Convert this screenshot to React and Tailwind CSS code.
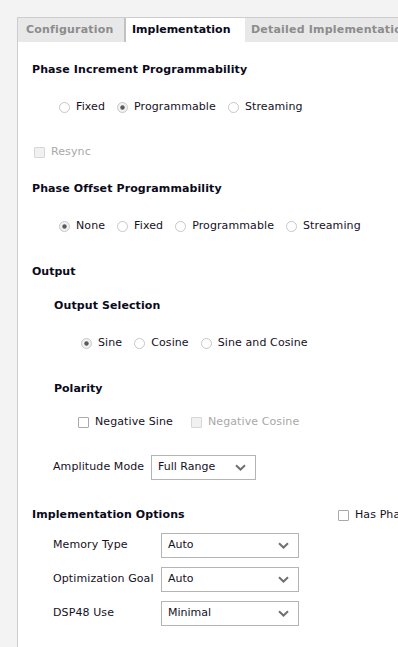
import React from "react";

const font = { fontFamily: '"DejaVu Sans", Verdana, sans-serif' };

function Radio({ checked, label }) {
  return (
    <div className="flex items-center">
      <svg width="11" height="11" viewBox="0 0 11 11" className="shrink-0">
        <circle cx="5.5" cy="5.5" r="5" fill={checked ? "#f2f2f2" : "#ffffff"} stroke="#c6c6c6" strokeWidth="1" />
        {checked && <circle cx="5.5" cy="5.5" r="2.2" fill="#5a5a5a" />}
      </svg>
      <span className="ml-[6px] text-[11px] tracking-[0.1px] text-[#16101e]">{label}</span>
    </div>
  );
}

function Check({ label, disabled }) {
  return (
    <div className="flex items-center">
      <div
        className={
          disabled
            ? "w-[11px] h-[11px] border border-[#d6d6d6] bg-[#f1f1f1] rounded-[1px] shrink-0"
            : "w-[11px] h-[11px] border border-[#a9a9a9] bg-white rounded-[1px] shrink-0"
        }
      />
      <span className={disabled ? "ml-[6px] text-[11px] tracking-[0.1px] text-[#a8a8a8]" : "ml-[6px] text-[11px] tracking-[0.1px] text-[#16101e]"}>{label}</span>
    </div>
  );
}

function Chevron() {
  return (
    <svg width="11" height="7" viewBox="0 0 11 7">
      <path d="M1 1.2 L5.5 5.5 L10 1.2" fill="none" stroke="#707070" strokeWidth="2" />
    </svg>
  );
}

function Select({ value, w }) {
  return (
    <div className={"h-[25px] border border-[#b4b4b4] bg-white flex items-center pl-[6px] pr-[9px] justify-between " + w}>
      <span className="text-[11px] text-[#16101e]">{value}</span>
      <Chevron />
    </div>
  );
}

export default function App() {
  return (
    <div className="w-[398px] h-[647px] bg-[#f3f3f3] overflow-hidden pt-[17px] pl-[17px]" style={font}>
      <div className="w-[600px] h-[640px] border-l border-t border-[#cdcdcd] bg-white">
        <div className="h-[24px] bg-[#e8e8e8] flex">
          <div className="w-[106px] flex items-center pt-[1px] pl-[8px] text-[11px] tracking-[0.2px] font-bold text-[#8c8c8c]">Configuration</div>
          <div className="w-[121px] bg-white border-l-2 border-[#c2c2c2] flex items-center pt-[1px] pl-[6px] text-[11px] font-bold text-[#0a0a1a]">Implementation</div>
          <div className="flex items-center pt-[1px] pl-[6px] text-[11px] tracking-[0.2px] font-bold text-[#8c8c8c] whitespace-nowrap">Detailed Implementation</div>
        </div>

        <div className="pl-[14px] text-[11px]">
          <div className="mt-[20px] h-[16px] flex items-center font-bold tracking-[0.1px] text-[#0a0a1a]">Phase Increment Programmability</div>
          <div className="mt-[21px] h-[16px] flex items-center gap-[12px] pl-[27px]">
            <Radio label="Fixed" />
            <Radio checked label="Programmable" />
            <Radio label="Streaming" />
          </div>
          <div className="mt-[29px] h-[16px] flex items-center pl-[2px]">
            <Check disabled label="Resync" />
          </div>
          <div className="mt-[21px] h-[16px] flex items-center font-bold tracking-[0.1px] text-[#0a0a1a]">Phase Offset Programmability</div>
          <div className="mt-[21px] h-[16px] flex items-center gap-[12px] pl-[27px]">
            <Radio checked label="None" />
            <Radio label="Fixed" />
            <Radio label="Programmable" />
            <Radio label="Streaming" />
          </div>
          <div className="mt-[30px] h-[16px] flex items-center font-bold text-[#0a0a1a]">Output</div>
          <div className="mt-[18px] h-[16px] flex items-center font-bold tracking-[0.1px] text-[#0a0a1a] pl-[22px]">Output Selection</div>
          <div className="mt-[21px] h-[16px] flex items-center gap-[12px] pl-[49px]">
            <Radio checked label="Sine" />
            <Radio label="Cosine" />
            <Radio label="Sine and Cosine" />
          </div>
          <div className="mt-[30px] h-[16px] flex items-center font-bold text-[#0a0a1a] pl-[22px]">Polarity</div>
          <div className="mt-[17px] h-[16px] flex items-center pl-[46px] gap-[18px]">
            <Check label="Negative Sine" />
            <Check disabled label="Negative Cosine" />
          </div>
          <div className="mt-[25px] h-[25px] flex items-center pl-[21px]">
            <span className="w-[98px] text-[#16101e] tracking-[0.1px]">Amplitude Mode</span>
            <Select value="Full Range" w="w-[105px]" />
          </div>
          <div className="mt-[27px] h-[16px] flex items-center">
            <span className="w-[306px] font-bold tracking-[0.1px] text-[#0a0a1a]">Implementation Options</span>
            <Check label="Has Phase Out" />
          </div>
          <div className="mt-[10px] h-[25px] flex items-center pl-[21px]">
            <span className="w-[108px] text-[#16101e] tracking-[0.1px]">Memory Type</span>
            <Select value="Auto" w="w-[138px]" />
          </div>
          <div className="mt-[9px] h-[25px] flex items-center pl-[21px]">
            <span className="w-[108px] text-[#16101e] tracking-[0.1px]">Optimization Goal</span>
            <Select value="Auto" w="w-[138px]" />
          </div>
          <div className="mt-[9px] h-[25px] flex items-center pl-[21px]">
            <span className="w-[108px] text-[#16101e] tracking-[0.1px]">DSP48 Use</span>
            <Select value="Minimal" w="w-[138px]" />
          </div>
        </div>
      </div>
    </div>
  );
}
